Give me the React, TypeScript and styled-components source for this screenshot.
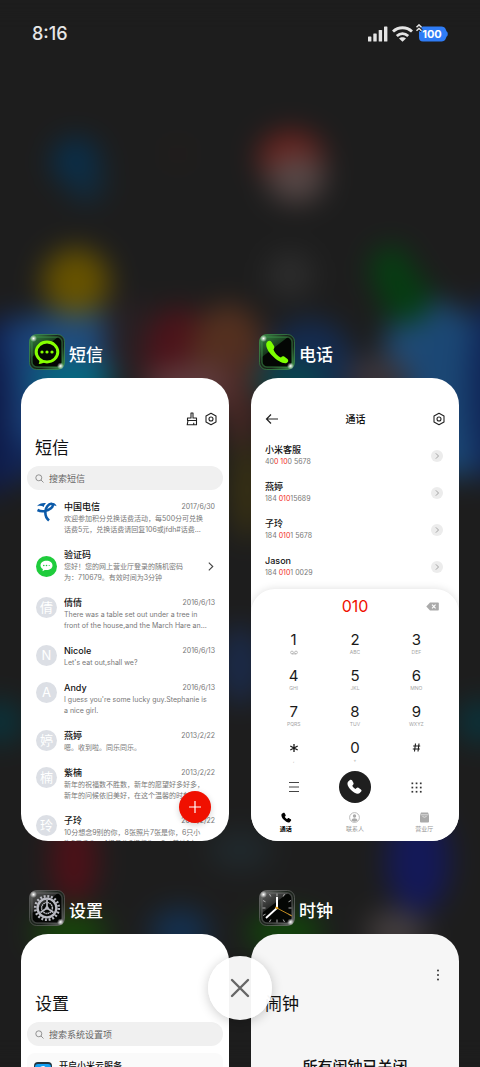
import React from "react";
import styled, { createGlobalStyle } from "styled-components";

const GlobalStyle = createGlobalStyle`
  * { box-sizing: border-box; }
  body {
    margin: 0;
    background: #1d1d1d;
    font-family: Inter, "Noto Sans CJK SC", sans-serif;
    color: #111;
  }
  button { border: 0; padding: 0; background: none; font: inherit; color: inherit; cursor: pointer; }
  h1, h2, p, ul { margin: 0; padding: 0; font-weight: 400; }
  ul { list-style: none; }
  svg { display: block; flex: none; }
`;

const Screen = styled.main`
  position: relative;
  height: 100vh;
  overflow: hidden;
`;

const Wallpaper = styled.svg`
  position: absolute;
  inset: 0;
  width: 100%;
  height: 100%;
`;

const StatusBar = styled.header`
  position: relative;
  display: flex;
  align-items: center;
  justify-content: space-between;
  height: 68px;
  padding: 0 31px 0 32px;
  color: #e6e6e6;
`;

const Clock = styled.time`
  font-size: 18px;
  line-height: 24px;
  font-weight: 500;
`;

const StatusIcons = styled.div`
  display: flex;
  align-items: center;
`;

const Recents = styled.div`
  position: relative;
  display: grid;
  grid-template-columns: 1fr 1fr;
  gap: 49px 22px;
  padding: 266px 21px 0;
`;

const Task = styled.section`
  display: flex;
  flex-direction: column;
  gap: 8px;
  min-width: 0;
`;

const TaskHeader = styled.header`
  display: flex;
  align-items: center;
  gap: 4px;
  padding-left: 8px;
`;

const TaskName = styled.h2`
  color: #fff;
  font-size: 17px;
  line-height: 24px;
  font-weight: 500;
  padding-top: 6px;
`;

const Card = styled.article<{ $tone?: string }>`
  position: relative;
  display: flex;
  flex-direction: column;
  aspect-ratio: 208 / 463;
  padding-top: 34px;
  border-radius: 27px;
  overflow: hidden;
  background: ${(p) => p.$tone ?? "#fff"};
`;

const Toolbar = styled.div`
  display: flex;
  align-items: center;
  justify-content: flex-end;
  gap: 6px;
  height: 14px;
  padding: 0 11px;
`;

const CardTitle = styled.h1`
  margin: 10px 14px 6px;
  font-size: 17px;
  line-height: 24px;
`;

const SearchPill = styled.label`
  display: flex;
  align-items: center;
  gap: 5px;
  height: 24px;
  margin: 0 6px;
  padding: 0 8px;
  border-radius: 12px;
  background: #f0f0f0;
`;

const SearchInput = styled.input`
  flex: 1;
  min-width: 0;
  height: 24px;
  padding: 0;
  border: 0;
  outline: 0;
  background: none;
  font: 9px/12px Inter, "Noto Sans CJK SC", sans-serif;
  &::placeholder { color: #666; opacity: 1; }
`;

const MessageList = styled.ul`
  padding: 11px 14px 0 15px;
`;

const MessageRow = styled.li<{ $centred?: boolean }>`
  display: flex;
  align-items: ${(p) => (p.$centred ? "center" : "flex-start")};
  gap: 7px;
  padding-bottom: 14px;
`;

const Avatar = styled.span<{ $tone: string }>`
  display: grid;
  place-items: center;
  flex: none;
  width: 21px;
  height: 21px;
  border-radius: 50%;
  background: ${(p) => p.$tone};
  color: #fff;
  font-size: 13px;
  line-height: 21px;
`;

const MessageBody = styled.div`
  flex: 1;
  min-width: 0;
`;

const MessageHead = styled.div`
  display: flex;
  justify-content: space-between;
  align-items: center;
`;

const Name = styled.h2`
  font-size: 9px;
  line-height: 12px;
  font-weight: 500;
`;

const DateText = styled.time`
  color: #777;
  font-size: 7px;
  line-height: 12px;
`;

const Snippet = styled.p`
  color: #777;
  font-size: 7px;
  line-height: 11px;
  white-space: pre;
`;

const ComposeButton = styled.button`
  position: absolute;
  right: 18px;
  bottom: 18px;
  display: grid;
  place-items: center;
  width: 32px;
  height: 32px;
  border-radius: 50%;
  background: #f01000;
  box-shadow: 0 2px 6px rgba(0, 0, 0, 0.18);
`;

const CallBar = styled.div`
  display: grid;
  grid-template-columns: 14px 1fr 14px;
  align-items: center;
  height: 14px;
  padding: 0 13px 0 14px;
`;

const CallTitle = styled.h1`
  font-size: 10px;
  line-height: 14px;
  font-weight: 500;
  text-align: center;
`;

const ContactList = styled.ul`
  padding: 18px 16px 0 14px;
`;

const ContactRow = styled.li`
  display: flex;
  align-items: center;
  justify-content: space-between;
  height: 23px;
  margin-bottom: 14px;
  &:last-child { margin-bottom: 0; }
`;

const PhoneNumber = styled.p`
  color: #777;
  font-size: 7px;
  line-height: 11px;
`;

const Match = styled.mark`
  background: none;
  color: #f22a1c;
`;

const MoreButton = styled.button`
  display: grid;
  place-items: center;
  width: 12px;
  height: 12px;
  border-radius: 50%;
  background: #ececec;
`;

const DialPanel = styled.div`
  margin-top: auto;
  border-radius: 24px 24px 0 0;
  background: #fff;
  box-shadow: 0 0 8px rgba(0, 0, 0, 0.13);
`;

const Display = styled.div`
  display: grid;
  grid-template-columns: 1fr auto 1fr;
  align-items: center;
  height: 34px;
  padding: 0 20px;
`;

const Typed = styled.output`
  grid-column: 2;
  color: #f01000;
  font-size: 16px;
  line-height: 20px;
`;

const Erase = styled.button`
  justify-self: end;
`;

const KeyGrid = styled.div`
  display: grid;
  grid-template-columns: repeat(3, 1fr);
  padding: 0 12px;
`;

const Key = styled.button`
  display: flex;
  flex-direction: column;
  align-items: center;
  height: 36px;
  padding-top: 7px;
`;

const Digit = styled.span`
  color: #1a1a1a;
  font-size: 15px;
  line-height: 20px;
`;

const Letters = styled.span`
  color: #a5a5a5;
  font-size: 5px;
  line-height: 5px;
`;

const ActionRow = styled.div`
  display: grid;
  grid-template-columns: repeat(3, 1fr);
  place-items: center;
  height: 40px;
  padding: 0 12px;
`;

const DialButton = styled.button`
  display: grid;
  place-items: center;
  width: 32px;
  height: 32px;
  border-radius: 50%;
  background: #1f1f1f;
`;

const TabBar = styled.nav`
  display: grid;
  grid-template-columns: repeat(3, 1fr);
  height: 34px;
  padding-top: 5px;
`;

const Tab = styled.button<{ $active?: boolean }>`
  display: flex;
  flex-direction: column;
  align-items: center;
  gap: 2px;
  color: ${(p) => (p.$active ? "#000" : "#999")};
  font-size: 6px;
  line-height: 8px;
  font-weight: ${(p) => (p.$active ? 700 : 400)};
`;

const SettingsItem = styled.button`
  display: flex;
  align-items: flex-start;
  gap: 7px;
  height: 40px;
  margin: 7px 6px 0;
  padding: 7px 7px 0;
  border-radius: 8px;
  background: #fafafa;
  font-size: 9px;
  line-height: 12px;
  font-weight: 500;
`;

const CloudIcon = styled.svg`
  margin-top: 2px;
`;

const AlarmStatus = styled.p`
  margin-top: 33px;
  font-size: 15px;
  line-height: 24px;
  font-weight: 500;
  text-align: center;
`;

const CloseAll = styled.button`
  position: absolute;
  left: 50%;
  bottom: 47px;
  display: grid;
  place-items: center;
  width: 64px;
  height: 64px;
  margin-left: -32px;
  border-radius: 50%;
  background: rgba(255, 255, 255, 0.95);
  box-shadow: 0 2px 12px rgba(0, 0, 0, 0.2);
`;

const blobs: [number, number, number, number, string][] = [
  [76, 162, 24, 24, "#082f4c"],
  [86, 182, 18, 20, "#0f2c41"],
  [178, 154, 12, 10, "#241b18"],
  [291, 158, 33, 27, "#6e211c"],
  [296, 178, 29, 25, "#564746"],
  [290, 275, 24, 24, "#2c2c2c"],
  [8, 400, 50, 84, "#12275a"],
  [45, 380, 58, 66, "#1a4278"],
  [78, 345, 40, 40, "#1f4c7e"],
  [-10, 410, 22, 90, "#0e1a48"],
  [72, 380, 42, 16, "#007080"],
  [76, 282, 34, 34, "#665200"],
  [130, 340, 26, 44, "#271f22"],
  [178, 355, 34, 48, "#4c131a"],
  [228, 350, 36, 46, "#54301f"],
  [196, 386, 52, 22, "#5e3b3e"],
  [240, 400, 16, 50, "#4b2824"],
  [310, 365, 44, 46, "#142b50"],
  [290, 380, 38, 16, "#064b4e"],
  [430, 350, 46, 50, "#1f4b76"],
  [455, 395, 44, 84, "#1b4774"],
  [492, 390, 24, 94, "#102557"],
  [378, 378, 32, 22, "#3b3439"],
  [391, 270, 21, 24, "#063f12"],
  [406, 298, 26, 26, "#063c12"],
  [247, 490, 14, 50, "#3d3411"],
  [240, 665, 22, 40, "#1b2a49"],
  [0, 722, 24, 22, "#0a323a"],
  [480, 722, 24, 22, "#0a323a"],
  [74, 860, 24, 46, "#4c1118"],
  [240, 850, 32, 20, "#20292d"],
  [418, 860, 32, 54, "#141958"],
  [70, 932, 38, 18, "#164a08"],
  [180, 932, 30, 24, "#14304f"],
  [285, 932, 38, 18, "#104a08"],
  [396, 932, 30, 22, "#443e3e"],
];

const Backdrop = () => (
  <Wallpaper viewBox="0 0 480 1067" preserveAspectRatio="xMidYMid slice" aria-hidden="true">
    <defs>
      <filter id="haze" filterUnits="userSpaceOnUse" x="-80" y="0" width="640" height="1067" colorInterpolationFilters="sRGB">
        <feGaussianBlur stdDeviation="14" />
      </filter>
    </defs>
    <rect width="480" height="1067" fill="#1d1d1d" />
    <g filter="url(#haze)">
      <rect x="-80" width="640" height="1067" fill="#1d1d1d" />
      {blobs.map(([cx, cy, rx, ry, fill], i) => (
        <ellipse key={i} cx={cx} cy={cy} rx={rx} ry={ry} fill={fill} />
      ))}
    </g>
  </Wallpaper>
);

const HANDSET =
  "M7.2 2.6 5.1 4.4C3 6.4 4.4 11 8.6 15.3s9 5.900 11 3.700l1.800-2c.8-1 .6-1.900-.3-2.600l-3.100-2c-.9-.6-1.700-.4-2.400.300l-1.200 1.200c-1.300-.5-3.600-2.800-4.200-4.200l1.100-1.200c.7-.7.800-1.500.3-2.400L9.900 2.900c-.6-.9-1.700-1-2.700-.3z";

const GlassTile = ({ id, glow, children }: { id: string; glow: string; children: React.ReactNode }) => (
  <svg width="36" height="36" viewBox="0 0 36 36" aria-hidden="true">
    <defs>
      <linearGradient id={`${id}-rim`} x1="0" y1="0" x2="1" y2="1">
        <stop offset="0" stopColor={glow} />
        <stop offset="0.4" stopColor="#1c241c" />
        <stop offset="0.65" stopColor="#182018" />
        <stop offset="1" stopColor={glow} />
      </linearGradient>
      <linearGradient id={`${id}-gloss`} x1="0" y1="0" x2="0.6" y2="0.8">
        <stop offset="0" stopColor={glow} stopOpacity="0.8" />
        <stop offset="1" stopColor={glow} stopOpacity="0.15" />
      </linearGradient>
      <radialGradient id={`${id}-spark`}>
        <stop offset="0" stopColor="#fff" />
        <stop offset="0.4" stopColor="#fff" stopOpacity="0.6" />
        <stop offset="1" stopColor="#fff" stopOpacity="0" />
      </radialGradient>
    </defs>
    <rect x="0.500" y="0.500" width="35" height="35" rx="7" fill={`url(#${id}-rim)`} stroke={glow} strokeOpacity="0.6" />
    <rect x="3" y="3" width="30" height="30" rx="5" fill="#040604" stroke={glow} strokeOpacity="0.5" strokeWidth="1.500" />
    <path d="M3 8a5 5 0 0 1 5-5h21L3 23z" fill={`url(#${id}-gloss)`} />
    {children}
    <circle cx="4.500" cy="4.500" r="3.500" fill={`url(#${id}-spark)`} />
    <circle cx="31.500" cy="32" r="3.500" fill={`url(#${id}-spark)`} />
  </svg>
);

const SmsTile = () => (
  <GlassTile id="sms" glow="#3f9b4d">
    <path d="M10 23.500c.8 2.500.5 4.500-.3 6.500 2.800-.2 5-1 6.500-2.500" fill="#86ff00" />
    <ellipse cx="18" cy="18" rx="10.800" ry="9.900" fill="#030803" stroke="#86ff00" strokeWidth="3" />
    <circle cx="13" cy="18" r="1.600" fill="#86ff00" />
    <circle cx="18" cy="18" r="1.600" fill="#86ff00" />
    <circle cx="23" cy="18" r="1.600" fill="#86ff00" />
  </GlassTile>
);

const PhoneTile = () => (
  <GlassTile id="tel" glow="#3f9b4d">
    <path d="M8.500 7.500C6 9.500 7 15 12.500 21s12 9 15 8c1.800-.8 2.300-2.700 1-4l-3.300-2.400c-1.300-.8-2.300-.2-3.200.8-3-1-6.800-5-7.500-8.200.9-1.200 1.200-2.200.4-3.500l-2.400-3.700c-1-1.300-2.700-1.500-4-.5z" fill="#7dff00" />
  </GlassTile>
);

const GearTile = () => (
  <GlassTile id="gear" glow="#6a6a6a">
    <g transform="translate(18 18)" stroke="#b9bac2" fill="none">
      <circle r="11.800" strokeWidth="2.600" strokeDasharray="1.900 1.807" />
      <circle r="9.400" strokeWidth="2.400" />
      <circle r="5.400" strokeWidth="1.500" strokeDasharray="1.500 .6" />
      <path d="M0-8V0L6.500 4.500M0 0-6.500 4.500" strokeWidth="1.700" />
      <circle r="1.800" fill="#b9bac2" stroke="none" />
    </g>
  </GlassTile>
);

const ClockTile = () => (
  <GlassTile id="clock" glow="#777">
    <path d="M18 3.500v3M18 29.500v3M3.500 18h3M29.500 18h3M10.500 4l1.300 2.500M25.500 4l-1.300 2.500M10.500 32l1.300-2.500M25.500 32l-1.300-2.500M4 10.500l2.500 1.300M32 10.500l-2.500 1.300M4 25.500l2.500-1.300M32 25.500l-2.500-1.300" stroke="#bbb" strokeWidth="0.900" />
    <path d="M18 18V7" stroke="#fff" strokeWidth="2" />
    <path d="M18 18 7 28" stroke="#fff" strokeWidth="1.800" />
    <path d="M16 17 33 26" stroke="#c08a1e" strokeWidth="1" />
    <circle cx="18" cy="18" r="1.300" fill="#e0a020" />
  </GlassTile>
);

const HexNut = () => (
  <svg width="14" height="14" viewBox="0 0 14 14" fill="none" stroke="#222" strokeLinejoin="round">
    <path d="M7 1.200 12 4v6L7 12.800 2 10V4z" strokeWidth="1.100" />
    <circle cx="7" cy="7" r="2" strokeWidth="1.100" />
  </svg>
);

const Broom = () => (
  <svg width="13" height="14" viewBox="0 0 13 14" fill="none" stroke="#222" strokeWidth="1.100" strokeLinejoin="round">
    <path d="M6 1h2v5h3.500v2.500h-9V6H6zM3 8.500l-.8 4.300h9.300V8.500M8.700 12.800v-2" />
  </svg>
);

const Magnifier = () => (
  <svg width="9" height="9" viewBox="0 0 9 9" fill="none" stroke="#888" strokeWidth="0.900">
    <circle cx="3.800" cy="3.800" r="3" />
    <path d="m6 6 2.500 2.500" />
  </svg>
);

const Chevron = ({ size, color }: { size: number; color: string }) => (
  <svg width={size} height={size} viewBox="0 0 8 8" fill="none" stroke={color} strokeWidth="1">
    <path d="m2.500.5 3.500 3.500L2.500 7.500" />
  </svg>
);

const TelecomLogo = () => (
  <svg width="21" height="21" viewBox="0 0 21 21" fill="#0b5aa9" aria-hidden="true">
    <path d="M1 5.200C3 2.600 6.500 1.700 10 2.200 8.600 3.400 8 4.600 7.800 5.900 6 4.700 3.600 4.500 1 5.200z" />
    <path
      d="M1.500 9c4.500 2.200 10 1 13.500-1.800 2.200-1.800 2.600-4.200.4-4.500-2.800-.2-5.600 3.600-6 8-.3 3.600 1 6.600 3.600 8.800"
      fill="none"
      stroke="#0b5aa9"
      strokeWidth="2.600"
    />
    <path d="M17 2c1.800.3 3 1.400 3.600 3.200-1-.6-2.200-.8-3.600-.5z" />
  </svg>
);

const BubbleGlyph = () => (
  <svg width="13" height="12" viewBox="0 0 13 12" aria-hidden="true">
    <path d="M6.500.8c3.500 0 6 2 6 4.700s-2.500 4.600-6 4.600c-.6 0-1.200 0-1.700-.2L2.500 11.300l.4-2.200C1.400 8.300.5 7 .5 5.500.5 2.800 3 .8 6.500.8z" fill="#fff" />
    <circle cx="3.800" cy="5.500" r=".8" fill="#1fcc3c" />
    <circle cx="6.500" cy="5.500" r=".8" fill="#1fcc3c" />
    <circle cx="9.200" cy="5.500" r=".6" fill="#1fcc3c" />
  </svg>
);

const GREY = "#dcdfe5";

type Message = { name: string; date?: string; text: string; avatar: React.ReactNode; tone?: string };

const messages: Message[] = [
  { name: "中国电信", date: "2017/6/30", text: "欢迎参加积分兑换话费活动，每500分可兑换\n话费5元，兑换话费请回复106或jfdh#话费…", avatar: <TelecomLogo />, tone: "transparent" },
  { name: "验证码", text: "您好！您的网上营业厅登录的随机密码\n为：710679。有效时间为3分钟", avatar: <BubbleGlyph />, tone: "#1fcc3c" },
  { name: "倩倩", date: "2016/6/13", text: "There was a table set out under a tree in\nfront of the house,and the March Hare an…", avatar: "倩" },
  { name: "Nicole", date: "2016/6/13", text: "Let's eat out,shall we?", avatar: "N" },
  { name: "Andy", date: "2016/6/13", text: "I guess you're some lucky guy.Stephanie is\na nice girl.", avatar: "A" },
  { name: "燕婷", date: "2013/2/22", text: "嗯。收到啦。同乐同乐。", avatar: "婷" },
  { name: "紫楠", date: "2013/2/22", text: "新年的祝福数不胜数，新年的愿望好多好多，\n新年的问候依旧美好，在这个温馨的时刻，…", avatar: "楠" },
  { name: "子玲", date: "2013/2/22", text: "10分想念9别的你，8张照片7张是你，6只小\n狗5只像你，4根骨头3根归你，2瓜着地1定…", avatar: "玲" },
];

const contacts = [
  { name: "小米客服", parts: ["40", "0 10", "0 5678"] },
  { name: "燕婷", parts: ["184 ", "010", "15689"] },
  { name: "子玲", parts: ["184 ", "010", "1 5678"] },
  { name: "Jason", parts: ["184 ", "010", "1 0029"] },
];

const keys = [
  ["1", ""], ["2", "ABC"], ["3", "DEF"],
  ["4", "GHI"], ["5", "JKL"], ["6", "MNO"],
  ["7", "PQRS"], ["8", "TUV"], ["9", "WXYZ"],
  ["*", ","], ["0", "+"], ["#", ""],
];

const Voicemail = () => (
  <svg width="8" height="5" viewBox="0 0 8 5" fill="none" stroke="#a5a5a5" strokeWidth="0.700">
    <circle cx="2" cy="2.500" r="1.400" />
    <circle cx="6" cy="2.500" r="1.400" />
    <path d="M2 3.900h4" />
  </svg>
);

const Star = () => (
  <svg width="10" height="20" viewBox="0 0 10 20" stroke="#1a1a1a" strokeWidth="1.300">
    <path d="M5 6v8M1.300 8l7.400 4M8.700 8l-7.400 4" />
  </svg>
);

const Hash = () => (
  <svg width="9" height="20" viewBox="0 0 9 20" fill="none" stroke="#1a1a1a" strokeWidth="1.100">
    <path d="M3.500 5.500 2.500 13.500M7 5.500 6 13.500M1.200 8h7M.8 11h7" />
  </svg>
);

const MessagesApp = () => (
  <Card>
    <Toolbar>
      <button aria-label="清理"><Broom /></button>
      <button aria-label="设置"><HexNut /></button>
    </Toolbar>
    <CardTitle>短信</CardTitle>
    <SearchPill>
      <Magnifier />
      <SearchInput placeholder="搜索短信" aria-label="搜索短信" />
    </SearchPill>
    <MessageList>
      {messages.map((m) => (
        <MessageRow key={m.name} $centred={!m.date}>
          <Avatar $tone={m.tone ?? GREY}>{m.avatar}</Avatar>
          <MessageBody>
            <MessageHead>
              <Name>{m.name}</Name>
              {m.date && <DateText>{m.date}</DateText>}
            </MessageHead>
            <Snippet>{m.text}</Snippet>
          </MessageBody>
          {!m.date && <Chevron size={9} color="#444" />}
        </MessageRow>
      ))}
    </MessageList>
    <ComposeButton aria-label="新建短信">
      <svg width="14" height="14" viewBox="0 0 14 14" stroke="#fff" strokeWidth="1.200">
        <path d="M7 1v12M1 7h12" />
      </svg>
    </ComposeButton>
  </Card>
);

const PhoneApp = () => (
  <Card>
    <CallBar>
      <button aria-label="返回">
        <svg width="14" height="12" viewBox="0 0 14 12" fill="none" stroke="#222" strokeWidth="1.200">
          <path d="M13 6H1.500M6 1.500 1.500 6 6 10.500" />
        </svg>
      </button>
      <CallTitle>通话</CallTitle>
      <button aria-label="设置"><HexNut /></button>
    </CallBar>
    <ContactList>
      {contacts.map((c) => (
        <ContactRow key={c.name}>
          <div>
            <Name>{c.name}</Name>
            <PhoneNumber>{c.parts[0]}<Match>{c.parts[1]}</Match>{c.parts[2]}</PhoneNumber>
          </div>
          <MoreButton aria-label="详情"><Chevron size={6} color="#888" /></MoreButton>
        </ContactRow>
      ))}
    </ContactList>
    <DialPanel>
      <Display>
        <Typed>010</Typed>
        <Erase aria-label="删除">
          <svg width="13" height="9" viewBox="0 0 13 9">
            <path d="M4 .5h8q.8 0 .8.800v6.400q0 .8-.8.800H4L.3 4.500z" fill="#aaa" />
            <path d="m6 2.700 3.600 3.600m0-3.600L6 6.300" stroke="#fff" strokeWidth="1.100" />
          </svg>
        </Erase>
      </Display>
      <KeyGrid>
        {keys.map(([d, l]) => (
          <Key key={d} aria-label={d}>
            {d === "*" ? <Star /> : d === "#" ? <Hash /> : <Digit>{d}</Digit>}
            {d === "1" ? <Voicemail /> : <Letters>{l}</Letters>}
          </Key>
        ))}
      </KeyGrid>
      <ActionRow>
        <button aria-label="菜单">
          <svg width="10" height="10" viewBox="0 0 10 10" stroke="#444" strokeWidth="1">
            <path d="M0 .5h10M0 5h10M0 9.500h10" />
          </svg>
        </button>
        <DialButton aria-label="拨号">
          <svg width="19" height="19" viewBox="1 0 24 24"><path d={HANDSET} fill="#fff" /></svg>
        </DialButton>
        <button aria-label="键盘">
          <svg width="11" height="11" viewBox="0 0 11 11" fill="#333">
            {[0, 1, 2].flatMap((r) => [0, 1, 2].map((c) => (
              <rect key={`${r}${c}`} x={0.5 + c * 4.2} y={0.5 + r * 4.2} width="1.700" height="1.700" />
            )))}
          </svg>
        </button>
      </ActionRow>
      <TabBar>
        <Tab $active>
          <svg width="12" height="11" viewBox="2 1 21 20"><path d={HANDSET} fill="#000" /></svg>
          通话
        </Tab>
        <Tab>
          <svg width="11" height="11" viewBox="0 0 11 11">
            <circle cx="5.500" cy="5.500" r="4.900" fill="none" stroke="#aaa" strokeWidth="0.800" />
            <circle cx="5.500" cy="4" r="1.700" fill="#aaa" />
            <path d="M2.500 8.600c.4-3 5.600-3 6 0-1.500 1.500-4.500 1.500-6 0z" fill="#aaa" />
          </svg>
          联系人
        </Tab>
        <Tab>
          <svg width="11" height="11" viewBox="0 0 11 11">
            <path d="M2 .5h7l1 2.500v6.500q0 1-1 1H2q-1 0-1-1V3z" fill="#aaa" />
            <path d="M3.500 4c.7 1.700 3.300 1.700 4 0M1.500 2.800h8" stroke="#e8e8e8" strokeWidth="0.800" fill="none" />
          </svg>
          营业厅
        </Tab>
      </TabBar>
    </DialPanel>
  </Card>
);

const SettingsApp = () => (
  <Card>
    <Toolbar />
    <CardTitle>设置</CardTitle>
    <SearchPill>
      <Magnifier />
      <SearchInput placeholder="搜索系统设置项" aria-label="搜索系统设置项" />
    </SearchPill>
    <SettingsItem>
      <CloudIcon width="18" height="18" viewBox="0 0 18 18" aria-hidden="true">
        <rect width="18" height="18" rx="4" fill="#223640" />
        <rect x="1" y="2" width="16" height="15" rx="3" fill="#12a0f4" />
        <path d="M5 12a2.500 2.500 0 0 1 0-5 4 4 0 0 1 7.500-.5A2.800 2.800 0 0 1 13 12z" fill="#fff" />
      </CloudIcon>
      开启小米云服务
    </SettingsItem>
  </Card>
);

const ClockApp = () => (
  <Card $tone="#f6f6f6">
    <Toolbar>
      <button aria-label="更多">
        <svg width="20" height="12" viewBox="0 0 20 12" fill="#222">
          <circle cx="10" cy="1.500" r="0.900" />
          <circle cx="10" cy="6" r="0.900" />
          <circle cx="10" cy="10.500" r="0.900" />
        </svg>
      </button>
    </Toolbar>
    <CardTitle>闹钟</CardTitle>
    <AlarmStatus>所有闹钟已关闭</AlarmStatus>
  </Card>
);

const tasks = [
  { name: "短信", Icon: SmsTile, App: MessagesApp },
  { name: "电话", Icon: PhoneTile, App: PhoneApp },
  { name: "设置", Icon: GearTile, App: SettingsApp },
  { name: "时钟", Icon: ClockTile, App: ClockApp },
];

export default function App() {
  return (
    <Screen>
      <GlobalStyle />
      <Backdrop />
      <StatusBar>
        <Clock>8:16</Clock>
        <StatusIcons>
          <svg width="82" height="20" viewBox="0 0 82 20" aria-label="信号 Wi-Fi 电量 100">
            <g fill="#e4e4e4">
              <rect x="1" y="12.500" width="3.400" height="5" rx="0.600" />
              <rect x="6.300" y="9.500" width="3.400" height="8" rx="0.600" />
              <rect x="11.700" y="6" width="3.400" height="11.500" rx="0.600" />
              <rect x="17" y="2.500" width="3.400" height="15" rx="0.600" />
            </g>
            <g fill="none" stroke="#e4e4e4" strokeWidth="2.900">
              <path d="M26 7.500c5.500-5 13.500-5 19 0" />
              <path d="M29.800 12c3.400-3 8-3 11.400 0" />
            </g>
            <path d="M35.500 17.800 32 14.600c1.900-1.800 5.100-1.800 7 0z" fill="#e4e4e4" />
            <path d="M56 2.500h18.500c2 0 3.800 1 4.300 3l.7 1.800q1.300.6 1.300 2.700t-1.300 2.700l-.7 1.800c-.5 2-2.300 3-4.300 3H56q-4 0-4-4V6.500q0-4 4-4z" fill="#2f7cf6" />
            <path d="M49.500 3.200 52 .900l2.500 2.300M49.500 6.800 52 4.500l2.500 2.300" fill="none" stroke="#1d1d1d" strokeWidth="3.500" />
            <path d="M49.500 3.200 52 .900l2.500 2.300M49.500 6.800 52 4.500l2.500 2.300" fill="none" stroke="#e4e4e4" strokeWidth="1.500" />
            <text x="65" y="14" textAnchor="middle" fontFamily="Inter, sans-serif" fontSize="11" fontWeight="700" fill="#fff">100</text>
          </svg>
        </StatusIcons>
      </StatusBar>
      <Recents>
        {tasks.map(({ name, Icon, App: Preview }) => (
          <Task key={name}>
            <TaskHeader>
              <Icon />
              <TaskName>{name}</TaskName>
            </TaskHeader>
            <Preview />
          </Task>
        ))}
      </Recents>
      <CloseAll aria-label="关闭全部">
        <svg width="20" height="20" viewBox="0 0 20 20" stroke="#666" strokeWidth="2.400" strokeLinecap="round">
          <path d="m2 2 16 16M18 2 2 18" />
        </svg>
      </CloseAll>
    </Screen>
  );
}
